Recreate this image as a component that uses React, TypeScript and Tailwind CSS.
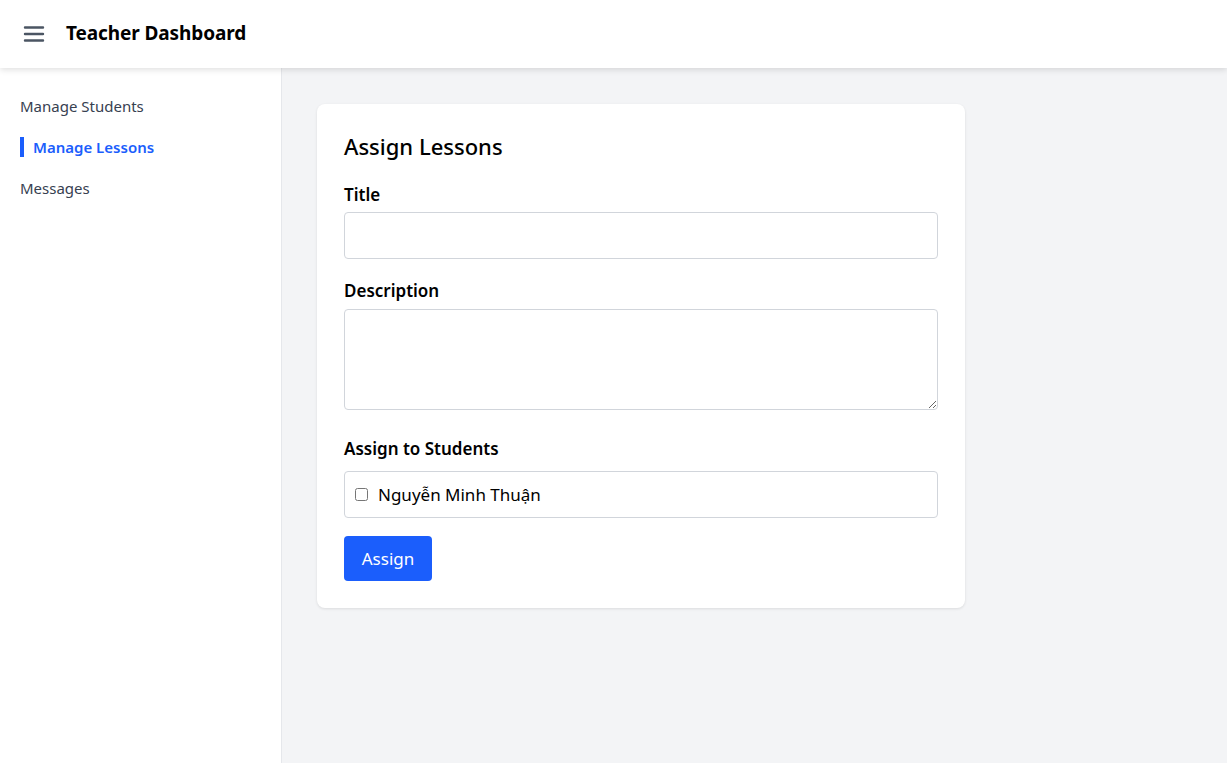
import React from "react";

export default function App() {
  const font = { fontFamily: '"Noto Sans", "Open Sans", sans-serif' };
  return (
    <div className="min-h-screen flex flex-col bg-[#f3f4f6] text-black" style={font}>
      <header className="h-[68px] bg-white flex items-center shadow-[0_2px_6px_rgba(0,0,0,0.12)] relative z-10 shrink-0">
        <button className="ml-[22px] w-[24px] h-[24px] flex items-center justify-center text-[#4b5563]">
          <svg width="22" height="18" viewBox="0 0 22 18" fill="none" stroke="currentColor" strokeWidth="2.4" strokeLinecap="round">
            <path d="M2 2.5h18M2 9h18M2 15.5h18" />
          </svg>
        </button>
        <h1 className="ml-[20px] text-[19px] font-bold tracking-[-0.1px] leading-[24px] -mt-[2px]">Teacher Dashboard</h1>
      </header>
      <div className="flex flex-1 min-h-[695px]">
        <aside className="w-[282px] bg-white border-r border-[#e5e7eb] shrink-0 pt-[28px] px-[20px]">
          <nav className="flex flex-col gap-[21px] text-[15px]">
            <a className="text-[#374151] h-[20px] leading-[20px]">Manage Students</a>
            <a className="text-[#1b5efc] font-semibold h-[20px] leading-[20px] border-l-[4px] border-[#1b5efc] pl-[9px]">Manage Lessons</a>
            <a className="text-[#374151] h-[20px] leading-[20px]">Messages</a>
          </nav>
        </aside>
        <main className="flex-1 p-[35px] pt-[36px]">
          <div className="w-[648px] bg-white rounded-[8px] shadow-[0_1px_3px_rgba(0,0,0,0.1)] px-[27px] pt-[27px] pb-[27px]">
            <h2 className="text-[22px] font-medium leading-[30px] mb-[22px]">Assign Lessons</h2>
            <label className="block text-[17px] font-semibold leading-[24px] mb-[5px]">Title</label>
            <input className="block w-full h-[47px] border border-[#d1d5db] rounded-[4px] px-3 text-[16px]" />
            <label className="block text-[17px] font-semibold leading-[24px] mt-[20px] mb-[6px]">Description</label>
            <textarea className="block w-full h-[101px] border border-[#d1d5db] rounded-[4px] px-3 text-[16px]" />
            <label className="block text-[17px] font-semibold leading-[24px] mt-[27px] mb-[10px]">Assign to Students</label>
            <div className="h-[47px] border border-[#d1d5db] rounded-[4px] flex items-center px-[10px] gap-[10px]">
              <input type="checkbox" className="w-[13px] h-[13px]" />
              <span className="text-[17px]">Nguyễn Minh Thuận</span>
            </div>
            <button className="mt-[18px] w-[88px] h-[45px] bg-[#1b5efc] text-white text-[17px] rounded-[4px]">Assign</button>
          </div>
        </main>
      </div>
    </div>
  );
}
